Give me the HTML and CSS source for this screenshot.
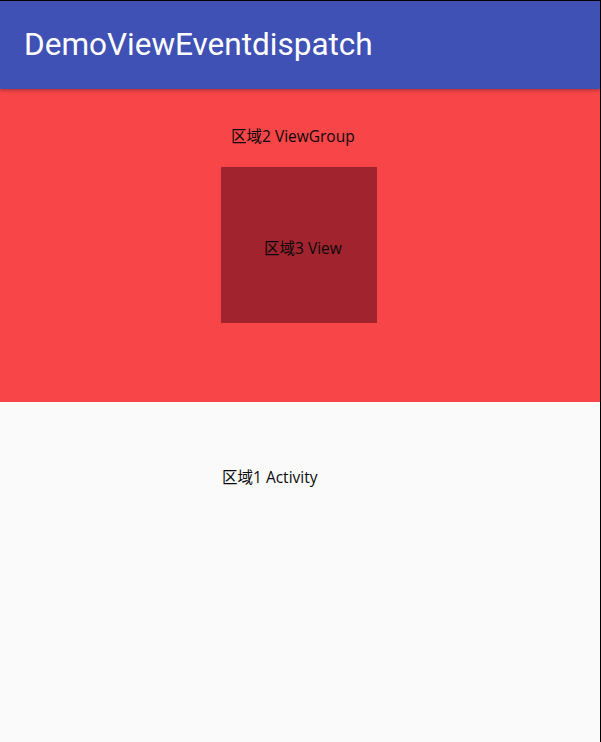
FILE: index.html
```html
<!DOCTYPE html>
<html>
<head>
<meta charset="utf-8">
<link rel="stylesheet" href="styles.css">
</head>
<body>
<div class="screen">
  <header class="appbar"><span class="title">DemoViewEventdispatch</span></header>
  <main class="content">
    <section class="group">
      <div class="label label-group">区域2 ViewGroup</div>
      <div class="view"><span class="label">区域3 View</span></div>
    </section>
    <section class="activity">
      <div class="label label-activity">区域1 Activity</div>
    </section>
  </main>
</div>
</body>
</html>
```
FILE: styles.css
```css
html, body { margin: 0; padding: 0; background: #000; }
.screen {
  width: 600px;
  height: 741px;
  margin-top: 1px;
  background: #fafafa;
  display: flex;
  flex-direction: column;
  overflow: hidden;
}
.appbar {
  height: 88px;
  background: #3f51b5;
  display: flex;
  align-items: center;
  padding-left: 24px;
  box-sizing: border-box;
  position: relative;
  z-index: 1;
  box-shadow: 0 1px 4px rgba(0,0,0,0.35);
}
.title {
  font-family: Roboto, "Noto Sans", sans-serif;
  font-size: 31.5px;
  color: #fff;
  margin-top: -2px;
}
.content { display: flex; flex-direction: column; flex: 1; }
.group {
  height: 313px;
  background: #f74548;
  box-sizing: border-box;
  padding-top: 37px;
}
.label {
  font-family: "Open Sans", "Noto Sans CJK SC", sans-serif;
  font-size: 15.5px;
  color: #0a0a0a;
  line-height: 20px;
}
.label-group { padding-left: 231px; }
.view {
  width: 156px;
  height: 156px;
  margin-left: 221px;
  margin-top: 21px;
  background: #a0232e;
  box-sizing: border-box;
  padding-left: 43px;
  padding-top: 71px;
}
.activity { flex: 1; padding-top: 65px; }
.label-activity { padding-left: 222px; }
```
